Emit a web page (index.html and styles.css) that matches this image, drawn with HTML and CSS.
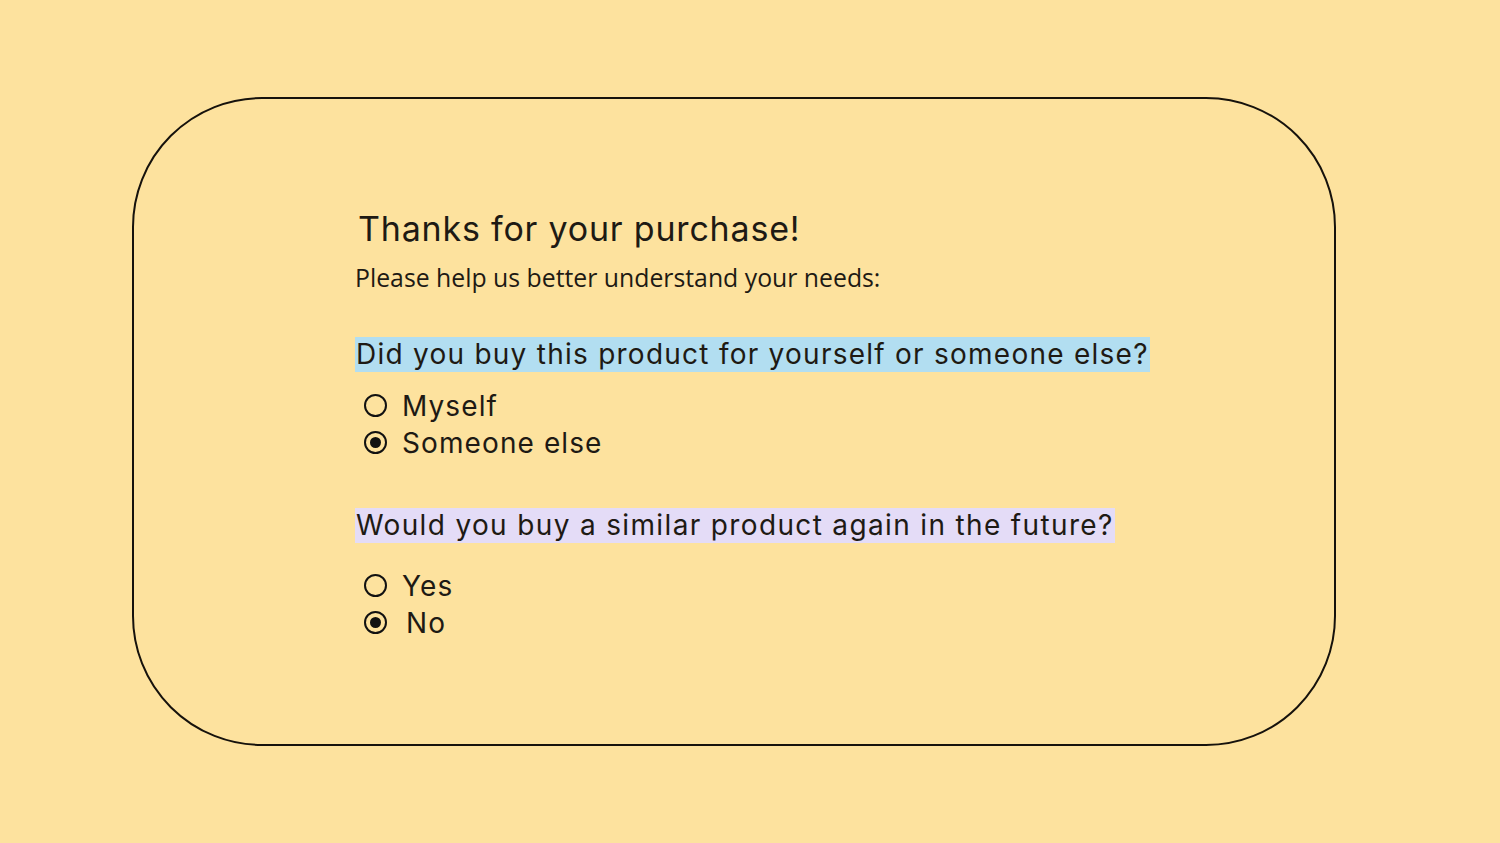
FILE: index.html
```html
<!DOCTYPE html>
<html lang="en">
<head>
<meta charset="utf-8">
<title>Thanks for your purchase</title>
<link rel="stylesheet" href="styles.css">
</head>
<body>
<main class="card">
  <h1 class="title">Thanks for your purchase!</h1>
  <p class="subtitle">Please help us better understand your needs:</p>

  <section class="question q1">
    <h2 class="q-label blue">Did you buy this product for yourself or someone else?</h2>
    <ul class="options">
      <li class="option"><span class="radio"></span><span class="opt-text">Myself</span></li>
      <li class="option"><span class="radio checked"></span><span class="opt-text">Someone else</span></li>
    </ul>
  </section>

  <section class="question q2">
    <h2 class="q-label lavender">Would you buy a similar product again in the future?</h2>
    <ul class="options">
      <li class="option"><span class="radio"></span><span class="opt-text">Yes</span></li>
      <li class="option"><span class="radio checked"></span><span class="opt-text no">No</span></li>
    </ul>
  </section>
</main>
</body>
</html>
```

FILE: styles.css
```css
html, body {
  margin: 0;
  padding: 0;
}

body {
  background: #fde29e;
  width: 1500px;
  height: 843px;
  overflow: hidden;
  color: #1e1a14;
  font-family: "Inter", "Liberation Sans", sans-serif;
}

.card {
  box-sizing: border-box;
  margin: 97px 0 0 132px;
  width: 1204px;
  height: 649px;
  border: 2px solid #16120c;
  border-radius: 130px;
  padding: 108px 0 0 221px;
  display: flex;
  flex-direction: column;
  align-items: flex-start;
}

.title {
  margin: 0 0 0 3px;
  font-size: 34px;
  font-weight: 400;
  line-height: 44px;
  letter-spacing: 0.8px;
}

.subtitle {
  margin: 10px 0 0 0;
  font-family: "Open Sans", sans-serif;
  font-size: 24.8px;
  line-height: 32px;
}

.question {
  display: flex;
  flex-direction: column;
  align-items: flex-start;
}

.q1 {
  margin-top: 44px;
}

.q2 {
  margin-top: 47px;
}

.q-label {
  margin: 0;
  font-size: 28px;
  font-weight: 400;
  line-height: 35px;
  padding: 0 1px;
}

.blue {
  background: #b2def1;
  letter-spacing: 1.25px;
}

.lavender {
  background: #e4dcf7;
  letter-spacing: 1.35px;
}

.options {
  list-style: none;
  margin: 15px 0 0 0;
  padding: 0 0 0 9px;
  display: flex;
  flex-direction: column;
}

.q2 .options {
  margin-top: 24px;
}

.option {
  display: flex;
  align-items: center;
  gap: 15px;
  height: 37px;
  font-size: 28px;
  letter-spacing: 1.1px;
}

.radio {
  box-sizing: border-box;
  width: 23px;
  height: 23px;
  border: 2.5px solid #111;
  border-radius: 50%;
  display: flex;
  align-items: center;
  justify-content: center;
}

.radio.checked::after {
  content: "";
  width: 11px;
  height: 11px;
  border-radius: 50%;
  background: #111;
}

.opt-text.no {
  margin-left: 4px;
}
```
